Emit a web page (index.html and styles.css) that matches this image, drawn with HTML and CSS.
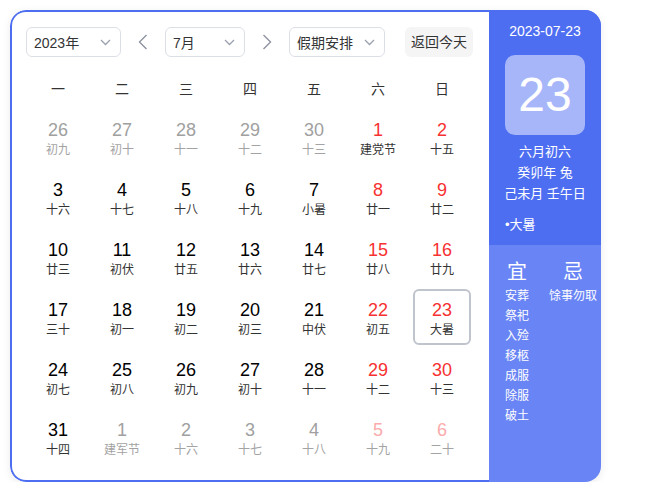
FILE: index.html
```html
<!DOCTYPE html>
<html lang="zh-CN">
<head>
<meta charset="utf-8">
<title>万年历</title>
<link rel="stylesheet" href="styles.css">
</head>
<body>
<div class="calendar">
  <div class="main">
    <div class="toolbar">
      <div class="select select-year"><span>2023年</span><svg class="chev" width="11" height="7" viewBox="0 0 11 7"><polyline points="1,1 5.5,5.5 10,1" fill="none" stroke="#9aa0ad" stroke-width="1.3"/></svg></div>
      <div class="arrow"><svg width="10" height="16" viewBox="0 0 10 16"><polyline points="8.5,1 1.5,8 8.5,15" fill="none" stroke="#8f93a0" stroke-width="1.4"/></svg></div>
      <div class="select select-month"><span>7月</span><svg class="chev" width="11" height="7" viewBox="0 0 11 7"><polyline points="1,1 5.5,5.5 10,1" fill="none" stroke="#9aa0ad" stroke-width="1.3"/></svg></div>
      <div class="arrow"><svg width="10" height="16" viewBox="0 0 10 16"><polyline points="1.5,1 8.5,8 1.5,15" fill="none" stroke="#8f93a0" stroke-width="1.4"/></svg></div>
      <div class="select select-holiday"><span>假期安排</span><svg class="chev" width="11" height="7" viewBox="0 0 11 7"><polyline points="1,1 5.5,5.5 10,1" fill="none" stroke="#9aa0ad" stroke-width="1.3"/></svg></div>
      <div class="today-btn">返回今天</div>
    </div>
    <div class="weekdays">
      <div>一</div><div>二</div><div>三</div><div>四</div><div>五</div><div>六</div><div>日</div>
    </div>
    <div class="days">
      <div class="day other"><div class="num">26</div><div class="lunar">初九</div></div>
      <div class="day other"><div class="num">27</div><div class="lunar">初十</div></div>
      <div class="day other"><div class="num">28</div><div class="lunar">十一</div></div>
      <div class="day other"><div class="num">29</div><div class="lunar">十二</div></div>
      <div class="day other"><div class="num">30</div><div class="lunar">十三</div></div>
      <div class="day weekend"><div class="num">1</div><div class="lunar">建党节</div></div>
      <div class="day weekend"><div class="num">2</div><div class="lunar">十五</div></div>

      <div class="day"><div class="num">3</div><div class="lunar">十六</div></div>
      <div class="day"><div class="num">4</div><div class="lunar">十七</div></div>
      <div class="day"><div class="num">5</div><div class="lunar">十八</div></div>
      <div class="day"><div class="num">6</div><div class="lunar">十九</div></div>
      <div class="day"><div class="num">7</div><div class="lunar">小暑</div></div>
      <div class="day weekend"><div class="num">8</div><div class="lunar">廿一</div></div>
      <div class="day weekend"><div class="num">9</div><div class="lunar">廿二</div></div>

      <div class="day"><div class="num">10</div><div class="lunar">廿三</div></div>
      <div class="day"><div class="num">11</div><div class="lunar">初伏</div></div>
      <div class="day"><div class="num">12</div><div class="lunar">廿五</div></div>
      <div class="day"><div class="num">13</div><div class="lunar">廿六</div></div>
      <div class="day"><div class="num">14</div><div class="lunar">廿七</div></div>
      <div class="day weekend"><div class="num">15</div><div class="lunar">廿八</div></div>
      <div class="day weekend"><div class="num">16</div><div class="lunar">廿九</div></div>

      <div class="day"><div class="num">17</div><div class="lunar">三十</div></div>
      <div class="day"><div class="num">18</div><div class="lunar">初一</div></div>
      <div class="day"><div class="num">19</div><div class="lunar">初二</div></div>
      <div class="day"><div class="num">20</div><div class="lunar">初三</div></div>
      <div class="day"><div class="num">21</div><div class="lunar">中伏</div></div>
      <div class="day weekend"><div class="num">22</div><div class="lunar">初五</div></div>
      <div class="day weekend selected"><div class="num">23</div><div class="lunar">大暑</div></div>

      <div class="day"><div class="num">24</div><div class="lunar">初七</div></div>
      <div class="day"><div class="num">25</div><div class="lunar">初八</div></div>
      <div class="day"><div class="num">26</div><div class="lunar">初九</div></div>
      <div class="day"><div class="num">27</div><div class="lunar">初十</div></div>
      <div class="day"><div class="num">28</div><div class="lunar">十一</div></div>
      <div class="day weekend"><div class="num">29</div><div class="lunar">十二</div></div>
      <div class="day weekend"><div class="num">30</div><div class="lunar">十三</div></div>

      <div class="day"><div class="num">31</div><div class="lunar">十四</div></div>
      <div class="day other"><div class="num">1</div><div class="lunar">建军节</div></div>
      <div class="day other"><div class="num">2</div><div class="lunar">十六</div></div>
      <div class="day other"><div class="num">3</div><div class="lunar">十七</div></div>
      <div class="day other"><div class="num">4</div><div class="lunar">十八</div></div>
      <div class="day other weekend"><div class="num">5</div><div class="lunar">十九</div></div>
      <div class="day other weekend"><div class="num">6</div><div class="lunar">二十</div></div>
    </div>
  </div>
  <div class="panel">
    <div class="panel-top">
      <div class="p-date">2023-07-23</div>
      <div class="p-big">23</div>
      <div class="p-lunar">
        <div>六月初六</div>
        <div>癸卯年 兔</div>
        <div>己未月 壬午日</div>
      </div>
      <div class="p-term">•大暑</div>
    </div>
    <div class="panel-bottom">
      <div class="yj">
        <div class="yj-title">宜</div>
        <div>安葬</div><div>祭祀</div><div>入殓</div><div>移柩</div><div>成服</div><div>除服</div><div>破土</div>
      </div>
      <div class="yj">
        <div class="yj-title">忌</div>
        <div>馀事勿取</div>
      </div>
    </div>
  </div>
</div>
</body>
</html>
```
FILE: styles.css
```css
html, body {
  margin: 0;
  padding: 0;
  background: #fff;
}
body {
  font-family: "Liberation Sans", "Noto Sans CJK SC", sans-serif;
  color: #333;
}
.calendar {
  display: flex;
  margin: 10px 0 0 10px;
  width: 591px;
  height: 472px;
  border-radius: 16px;
  overflow: hidden;
  box-shadow: 0 2px 8px rgba(0, 0, 0, 0.08);
}
.main {
  width: 479px;
  height: 472px;
  flex: none;
  border: 2px solid #4e6ef2;
  border-right: none;
  border-radius: 16px 0 0 16px;
  padding: 15px 0 0 14px;
  box-sizing: border-box;
  background: #fff;
}
.toolbar {
  display: flex;
  align-items: center;
  height: 30px;
}
.select {
  height: 30px;
  box-sizing: border-box;
  border: 1px solid #dcdfe6;
  border-radius: 6px;
  display: flex;
  align-items: center;
  justify-content: space-between;
  padding: 0 9px 0 7px;
  font-size: 14px;
  color: #333;
}
.select-year { width: 95px; }
.select-month { width: 80px; }
.select-holiday { width: 96px; }
.arrow {
  width: 44px;
  height: 30px;
  display: flex;
  align-items: center;
  justify-content: center;
}
.today-btn {
  margin-left: 20px;
  width: 68px;
  height: 30px;
  line-height: 30px;
  text-align: center;
  background: #f5f5f6;
  border-radius: 6px;
  font-size: 14px;
  color: #333;
}
.weekdays {
  display: grid;
  grid-template-columns: repeat(7, 64px);
  margin-top: 16px;
  height: 32px;
  line-height: 32px;
  text-align: center;
  font-size: 14px;
  color: #333;
  margin-bottom: 2px;
}
.days {
  display: grid;
  grid-template-columns: repeat(7, 64px);
  grid-auto-rows: 60px;
}
.day {
  margin: 2px 3px;
  height: 56px;
  box-sizing: border-box;
  border: 2px solid transparent;
  border-radius: 6px;
  padding-top: 9px;
  text-align: center;
}
.num {
  font-size: 18px;
  line-height: 20px;
  color: #000;
  font-family: "Liberation Sans", sans-serif;
}
.lunar {
  font-size: 12px;
  line-height: 20px;
  color: #333;
}
.day.weekend .num { color: #f73131; }
.day.other .num { color: #a0a0a0; }
.day.other .lunar { color: #a3a3a3; }
.day.other.weekend .num { color: #fbabab; }
.day.selected { border-color: #c0c4cc; }

.panel {
  width: 112px;
  height: 472px;
  flex: none;
  display: flex;
  flex-direction: column;
  color: #fff;
  background: #6984f4;
}
.panel-top {
  background: #4e6ef2;
  padding: 11px 0 10px;
  display: flex;
  flex-direction: column;
  align-items: center;
}
.p-date {
  font-size: 14px;
  line-height: 20px;
}
.p-big {
  margin-top: 14px;
  width: 80px;
  height: 80px;
  border-radius: 10px;
  background: #a7b6f8;
  font-size: 48px;
  line-height: 80px;
  text-align: center;
  font-family: "Liberation Sans", sans-serif;
}
.p-lunar {
  margin-top: 6px;
  font-size: 13px;
  line-height: 21px;
  text-align: center;
}
.p-term {
  margin-top: 11px;
  align-self: flex-start;
  padding-left: 16px;
  font-size: 13px;
  line-height: 20px;
}
.panel-bottom {
  flex: 1;
  display: flex;
  gap: 20px;
  padding: 13px 0 0 16px;
  font-size: 12px;
  line-height: 20px;
}
.yj {
  display: flex;
  flex-direction: column;
  align-items: center;
}
.yj-title {
  font-size: 20px;
  line-height: 28px;
}
```
